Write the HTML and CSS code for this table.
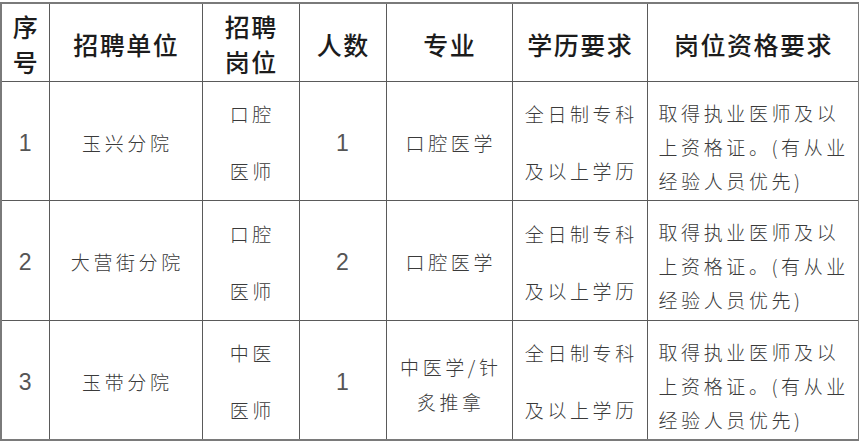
FILE: index.html
```html
<!DOCTYPE html>
<html lang="zh-CN">
<head>
<meta charset="utf-8">
<title>招聘岗位</title>
<link rel="stylesheet" href="styles.css">
</head>
<body>
<table class="grid">
  <colgroup>
    <col class="c1"><col class="c2"><col class="c3"><col class="c4"><col class="c5"><col class="c6"><col class="c7">
  </colgroup>
  <tr class="head">
    <th>序<br>号</th>
    <th>招聘单位</th>
    <th>招聘<br>岗位</th>
    <th>人数</th>
    <th>专业</th>
    <th>学历要求</th>
    <th>岗位资格要求</th>
  </tr>
  <tr class="r1">
    <td class="num">1</td>
    <td>玉兴分院</td>
    <td class="pair">口腔<br>医师</td>
    <td class="num">1</td>
    <td>口腔医学</td>
    <td class="pair">全日制专科<br>及以上学历</td>
    <td class="req">取得执业医师及以<br>上资格证。(有从业<br>经验人员优先)</td>
  </tr>
  <tr class="r2">
    <td class="num">2</td>
    <td>大营街分院</td>
    <td class="pair">口腔<br>医师</td>
    <td class="num">2</td>
    <td>口腔医学</td>
    <td class="pair">全日制专科<br>及以上学历</td>
    <td class="req">取得执业医师及以<br>上资格证。(有从业<br>经验人员优先)</td>
  </tr>
  <tr class="r3">
    <td class="num">3</td>
    <td>玉带分院</td>
    <td class="pair">中医<br>医师</td>
    <td class="num">1</td>
    <td class="two">中医学/针<br>炙推拿</td>
    <td class="pair">全日制专科<br>及以上学历</td>
    <td class="req">取得执业医师及以<br>上资格证。(有从业<br>经验人员优先)</td>
  </tr>
</table>
</body>
</html>
```
FILE: styles.css
```css
body {
  margin: 0;
  background: #ffffff;
}

.grid {
  border-collapse: collapse;
  table-layout: fixed;
  width: 858px;
  margin-top: 2px;
  border: 2px solid #7a7a7a;
  font-family: "Noto Sans CJK SC", sans-serif;
}

.c1 { width: 48px; }
.c2 { width: 153px; }
.c3 { width: 97px; }
.c4 { width: 87px; }
.c5 { width: 126px; }
.c6 { width: 135px; }
.c7 { width: 212px; }

.grid th,
.grid td {
  border: 1px solid #5a5a5a;
  padding: 0;
  text-align: center;
  vertical-align: middle;
  white-space: nowrap;
}

.grid th {
  font-size: 25px;
  font-weight: 500;
  color: #1c1c1c;
  letter-spacing: 1.5px;
  padding-left: 1.5px;
  line-height: 35px;
  padding-top: 4px;
}

.head { height: 78px; }
.r1 { height: 119px; }
.r2 { height: 120px; }
.r3 { height: 120px; }

.grid td {
  font-size: 19px;
  font-weight: 300;
  color: #3a3a3a;
  letter-spacing: 3.6px;
  padding-left: 3.6px;
  line-height: 34px;
  padding-top: 4px;
}

.grid td.pair {
  line-height: 57px;
  padding-top: 3px;
}

.grid td.two {
  line-height: 35px;
  padding-top: 8px;
}

.grid td.num {
  font-family: "Liberation Sans", sans-serif;
  font-size: 23px;
  font-weight: 400;
  color: #555555;
  letter-spacing: 0;
  padding-left: 0;
}

.grid td.req {
  text-align: left;
  vertical-align: top;
  padding: 14px 0 0 11px;
  line-height: 34px;
}
```
